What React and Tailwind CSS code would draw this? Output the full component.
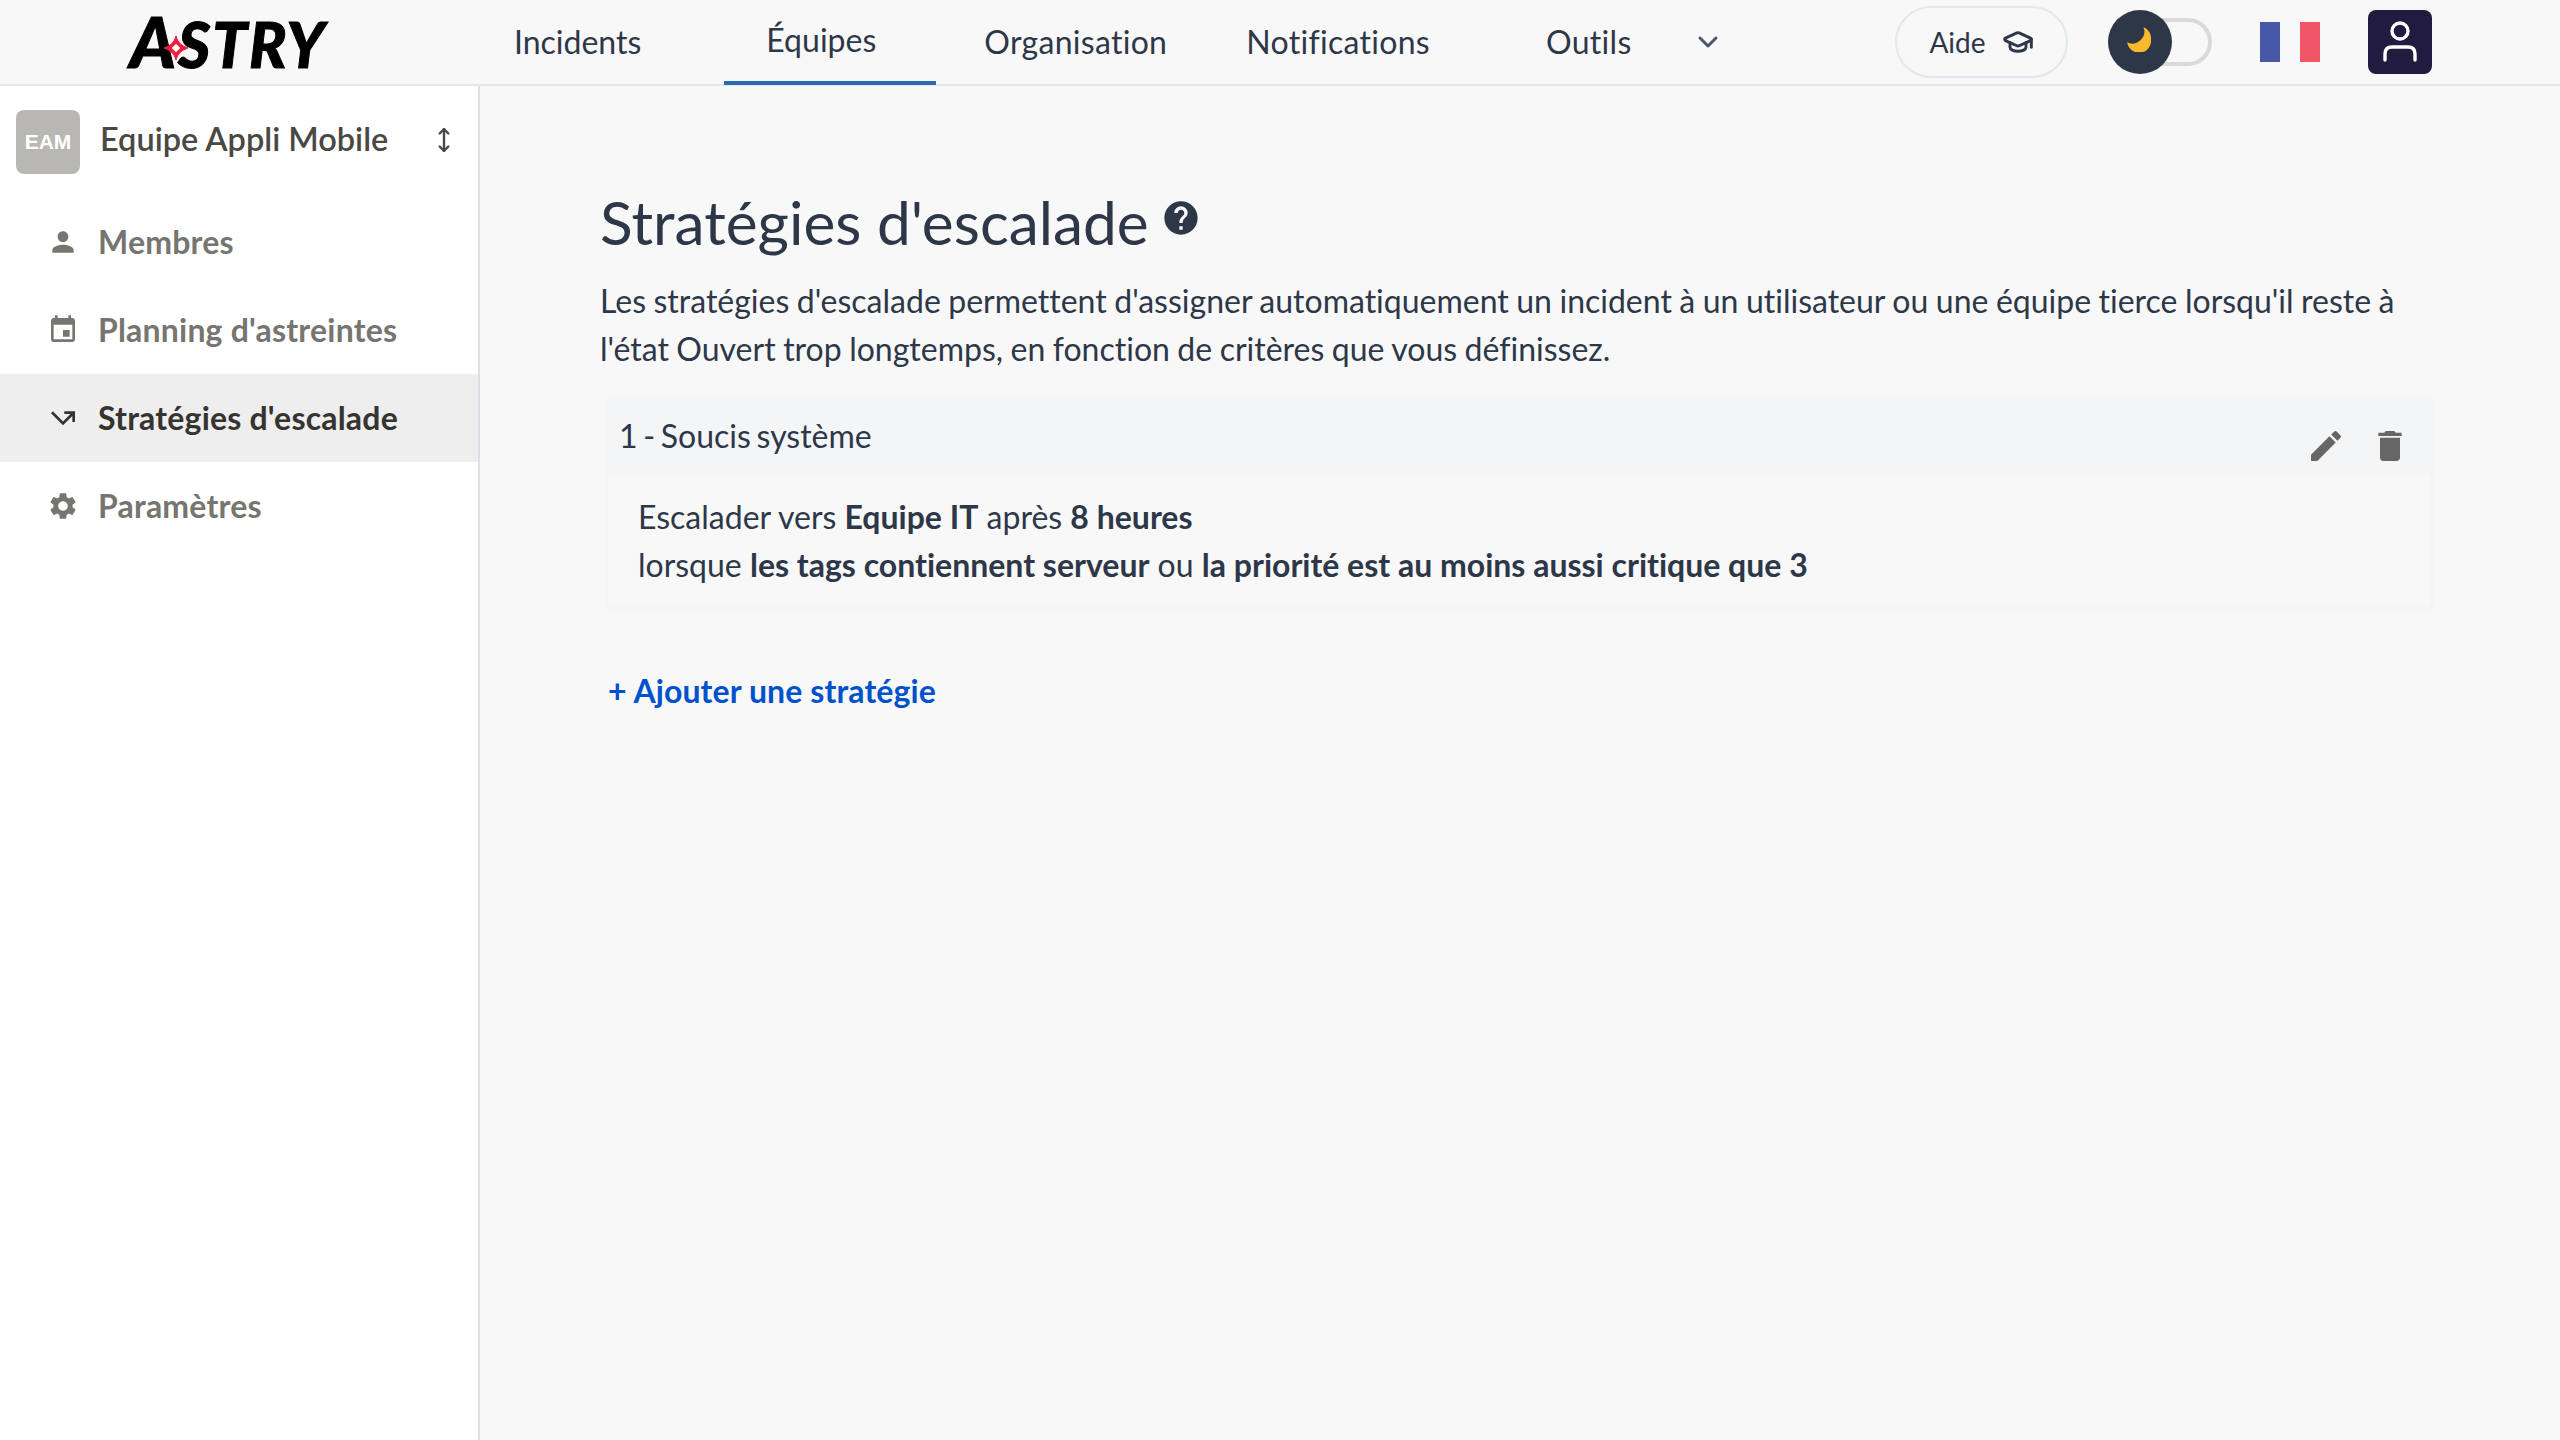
import { ChevronDown, GraduationCap, MoveVertical } from 'lucide-react'
import { MdCallMissedOutgoing, MdDelete, MdEdit, MdEvent, MdHelp, MdPerson, MdSettings } from 'react-icons/md'

const sideItems = [
  { label: 'Membres', icon: MdPerson },
  { label: "Planning d'astreintes", icon: MdEvent },
  { label: "Stratégies d'escalade", icon: MdCallMissedOutgoing, active: true },
  { label: 'Paramètres', icon: MdSettings },
]

function Logo() {
  return (
    <div className="relative ml-[130px] w-[206px] h-[84px] flex items-center">
      <span className="font-['Lato',sans-serif] font-black italic text-[62px] leading-[84px] text-black tracking-[2px] [-webkit-text-stroke:1px_black] whitespace-nowrap">
        <span className="text-[70px]">A</span>STRY
      </span>
      <svg className="absolute left-[34px] top-[36px] w-[24px] h-[24px]" viewBox="0 0 24 24">
        <path d="M12 0 Q14 9 24 12 Q14 15 12 24 Q10 15 0 12 Q10 9 12 0Z" fill="#ef1c3c" stroke="#ef1c3c" />
        <rect x="9" y="9" width="6" height="6" fill="#fff" transform="rotate(45 12 12)" />
      </svg>
    </div>
  )
}

function Header() {
  return (
    <header className="h-[86px] flex-shrink-0 flex items-center bg-[#f8f8f8] border-b-2 border-[#e2e8f0] text-[#2d3748] text-[32px]">
      <Logo />
      <nav className="flex items-center h-full ml-[178px]">
        <a className="mr-[83px]">Incidents</a>
        <a className="h-full w-[212px] flex items-center pl-[42px] border-b-4 border-[#2b6cb0] pb-[2px] mb-[-2px] mr-[48px]">Équipes</a>
        <a className="mr-[79px] tracking-[0.3px]">Organisation</a>
        <a className="mr-[116px] tracking-[0.3px]">Notifications</a>
        <a className="tracking-[0.3px]">Outils</a>
        <ChevronDown className="w-[32px] h-[32px] ml-[60px] text-[#4a5568]" strokeWidth={2.2} />
      </nav>
      <div className="ml-auto mr-[128px] flex items-center">
        <button className="h-[72px] w-[173px] rounded-full border-2 border-[#e2e8f0] flex items-center justify-center gap-[16px] text-[28px]">
          Aide
          <GraduationCap className="w-[32px] h-[32px]" strokeWidth={2.2} />
        </button>
        <div className="relative ml-[40px] w-[104px] h-[48px] rounded-full border-4 border-[#d9d9d9]">
          <div className="absolute left-[-4px] top-[-12px] w-[64px] h-[64px] rounded-full bg-[#2d3748] flex items-center justify-center pr-[4px] pb-[6px]">
            <svg className="w-[26px] h-[26px]" viewBox="0 0 24 24">
              <path d="M17 1 A11 11 0 0 1 2 15 A11 11 0 0 0 24 12 A11 11 0 0 0 17 1Z" fill="#fbb92e" />
            </svg>
          </div>
        </div>
        <div className="ml-[48px] w-[60px] h-[40px] flex">
          <div className="flex-1 bg-[#4658a6]" />
          <div className="flex-1 bg-[#f7f8fa]" />
          <div className="flex-1 bg-[#f15667]" />
        </div>
        <div className="ml-[48px] w-[64px] h-[64px] rounded-[8px] bg-[#201b3f] flex items-center justify-center">
          <svg className="w-[40px] h-[44px]" viewBox="0 0 40 44" fill="none" stroke="#fff" strokeWidth="3.4" strokeLinecap="round">
            <circle cx="20" cy="11" r="8" />
            <path d="M5 40 V34 Q5 27 12 27 H28 Q35 27 35 34 V40" />
          </svg>
        </div>
      </div>
    </header>
  )
}

function Sidebar() {
  return (
    <aside className="w-[480px] flex-shrink-0 bg-white border-r-2 border-[#dcdfe4] text-[32px]">
      <div className="flex items-center h-[64px] mt-[24px] pl-[16px]">
        <div className="w-[64px] h-[64px] rounded-[8px] bg-[#b9b7b4] flex items-center justify-center text-white font-bold text-[21px] font-['Liberation_Sans',sans-serif]">
          EAM
        </div>
        <span className="ml-[20px] mt-[-7px] text-[#4a4843] font-semibold text-[32.5px] leading-[48px]">Equipe Appli Mobile</span>
        <MoveVertical className="ml-[43px] mt-[-4px] w-[26px] h-[28px] text-[#4a4843]" strokeWidth={2.2} />
      </div>
      <ul className="mt-[24px]">
        {sideItems.map(({ label, icon: Icon, active }) => (
          <li
            key={label}
            className={
              active
                ? 'h-[88px] flex items-center pl-[47px] bg-[#eeeeee] text-[#35342f] font-bold'
                : 'h-[88px] flex items-center pl-[47px] text-[#76756f] font-bold'
            }
          >
            <Icon className="w-[32px] h-[32px] flex-shrink-0" />
            <span className="ml-[19px] tracking-[0.2px]">{label}</span>
          </li>
        ))}
      </ul>
    </aside>
  )
}

function StrategyCard() {
  return (
    <div className="ml-[6px] mt-[26px] border-2 border-t-0 border-[#f4f5f7]">
      <div className="h-[74px] bg-[#f4f5f7] flex items-start pl-[12px] pr-[23px] mx-[-2px]">
        <span className="mt-[13px] ml-[1px] [word-spacing:-2.5px]">1 - Soucis système</span>
        <div className="ml-auto mt-[27px] flex items-center gap-[24px] text-[#666666]">
          <MdEdit className="w-[40px] h-[40px]" />
          <MdDelete className="w-[40px] h-[40px]" />
        </div>
      </div>
      <div className="pl-[30px] pt-[20px] pb-[18px] leading-[48px]">
        <p>
          Escalader vers <b className="font-bold">Equipe IT</b> après <b className="font-bold">8 heures</b>
        </p>
        <p>
          lorsque <b className="font-bold">les tags contiennent serveur</b> ou{' '}
          <b className="font-bold">la priorité est au moins aussi critique que 3</b>
        </p>
      </div>
    </div>
  )
}

export default function App() {
  return (
    <div className="h-screen flex flex-col bg-[#f8f8f8] font-['Lato',sans-serif] [font-variant-ligatures:none] overflow-hidden">
      <Header />
      <div className="flex flex-1 min-h-0">
        <Sidebar />
        <main className="flex-1 pl-[120px] pr-[127px] pt-[96px] text-[#2d3748] text-[32px]">
          <h1 className="flex items-center text-[60.4px] leading-[80px]">
            Stratégies d'escalade
            <MdHelp className="ml-[12px] mt-[-8px] w-[40px] h-[40px]" />
          </h1>
          <p className="mt-[15px] leading-[48px] [word-spacing:-0.7px]">
            Les stratégies d'escalade permettent d'assigner automatiquement un incident à un utilisateur ou une équipe
            tierce lorsqu'il reste à l'état Ouvert trop longtemps, en fonction de critères que vous définissez.
          </p>
          <StrategyCard />
          <a className="block ml-[8px] mt-[58px] leading-[48px] font-bold tracking-[0.1px] text-[#0052cc]">+ Ajouter une stratégie</a>
        </main>
      </div>
    </div>
  )
}
